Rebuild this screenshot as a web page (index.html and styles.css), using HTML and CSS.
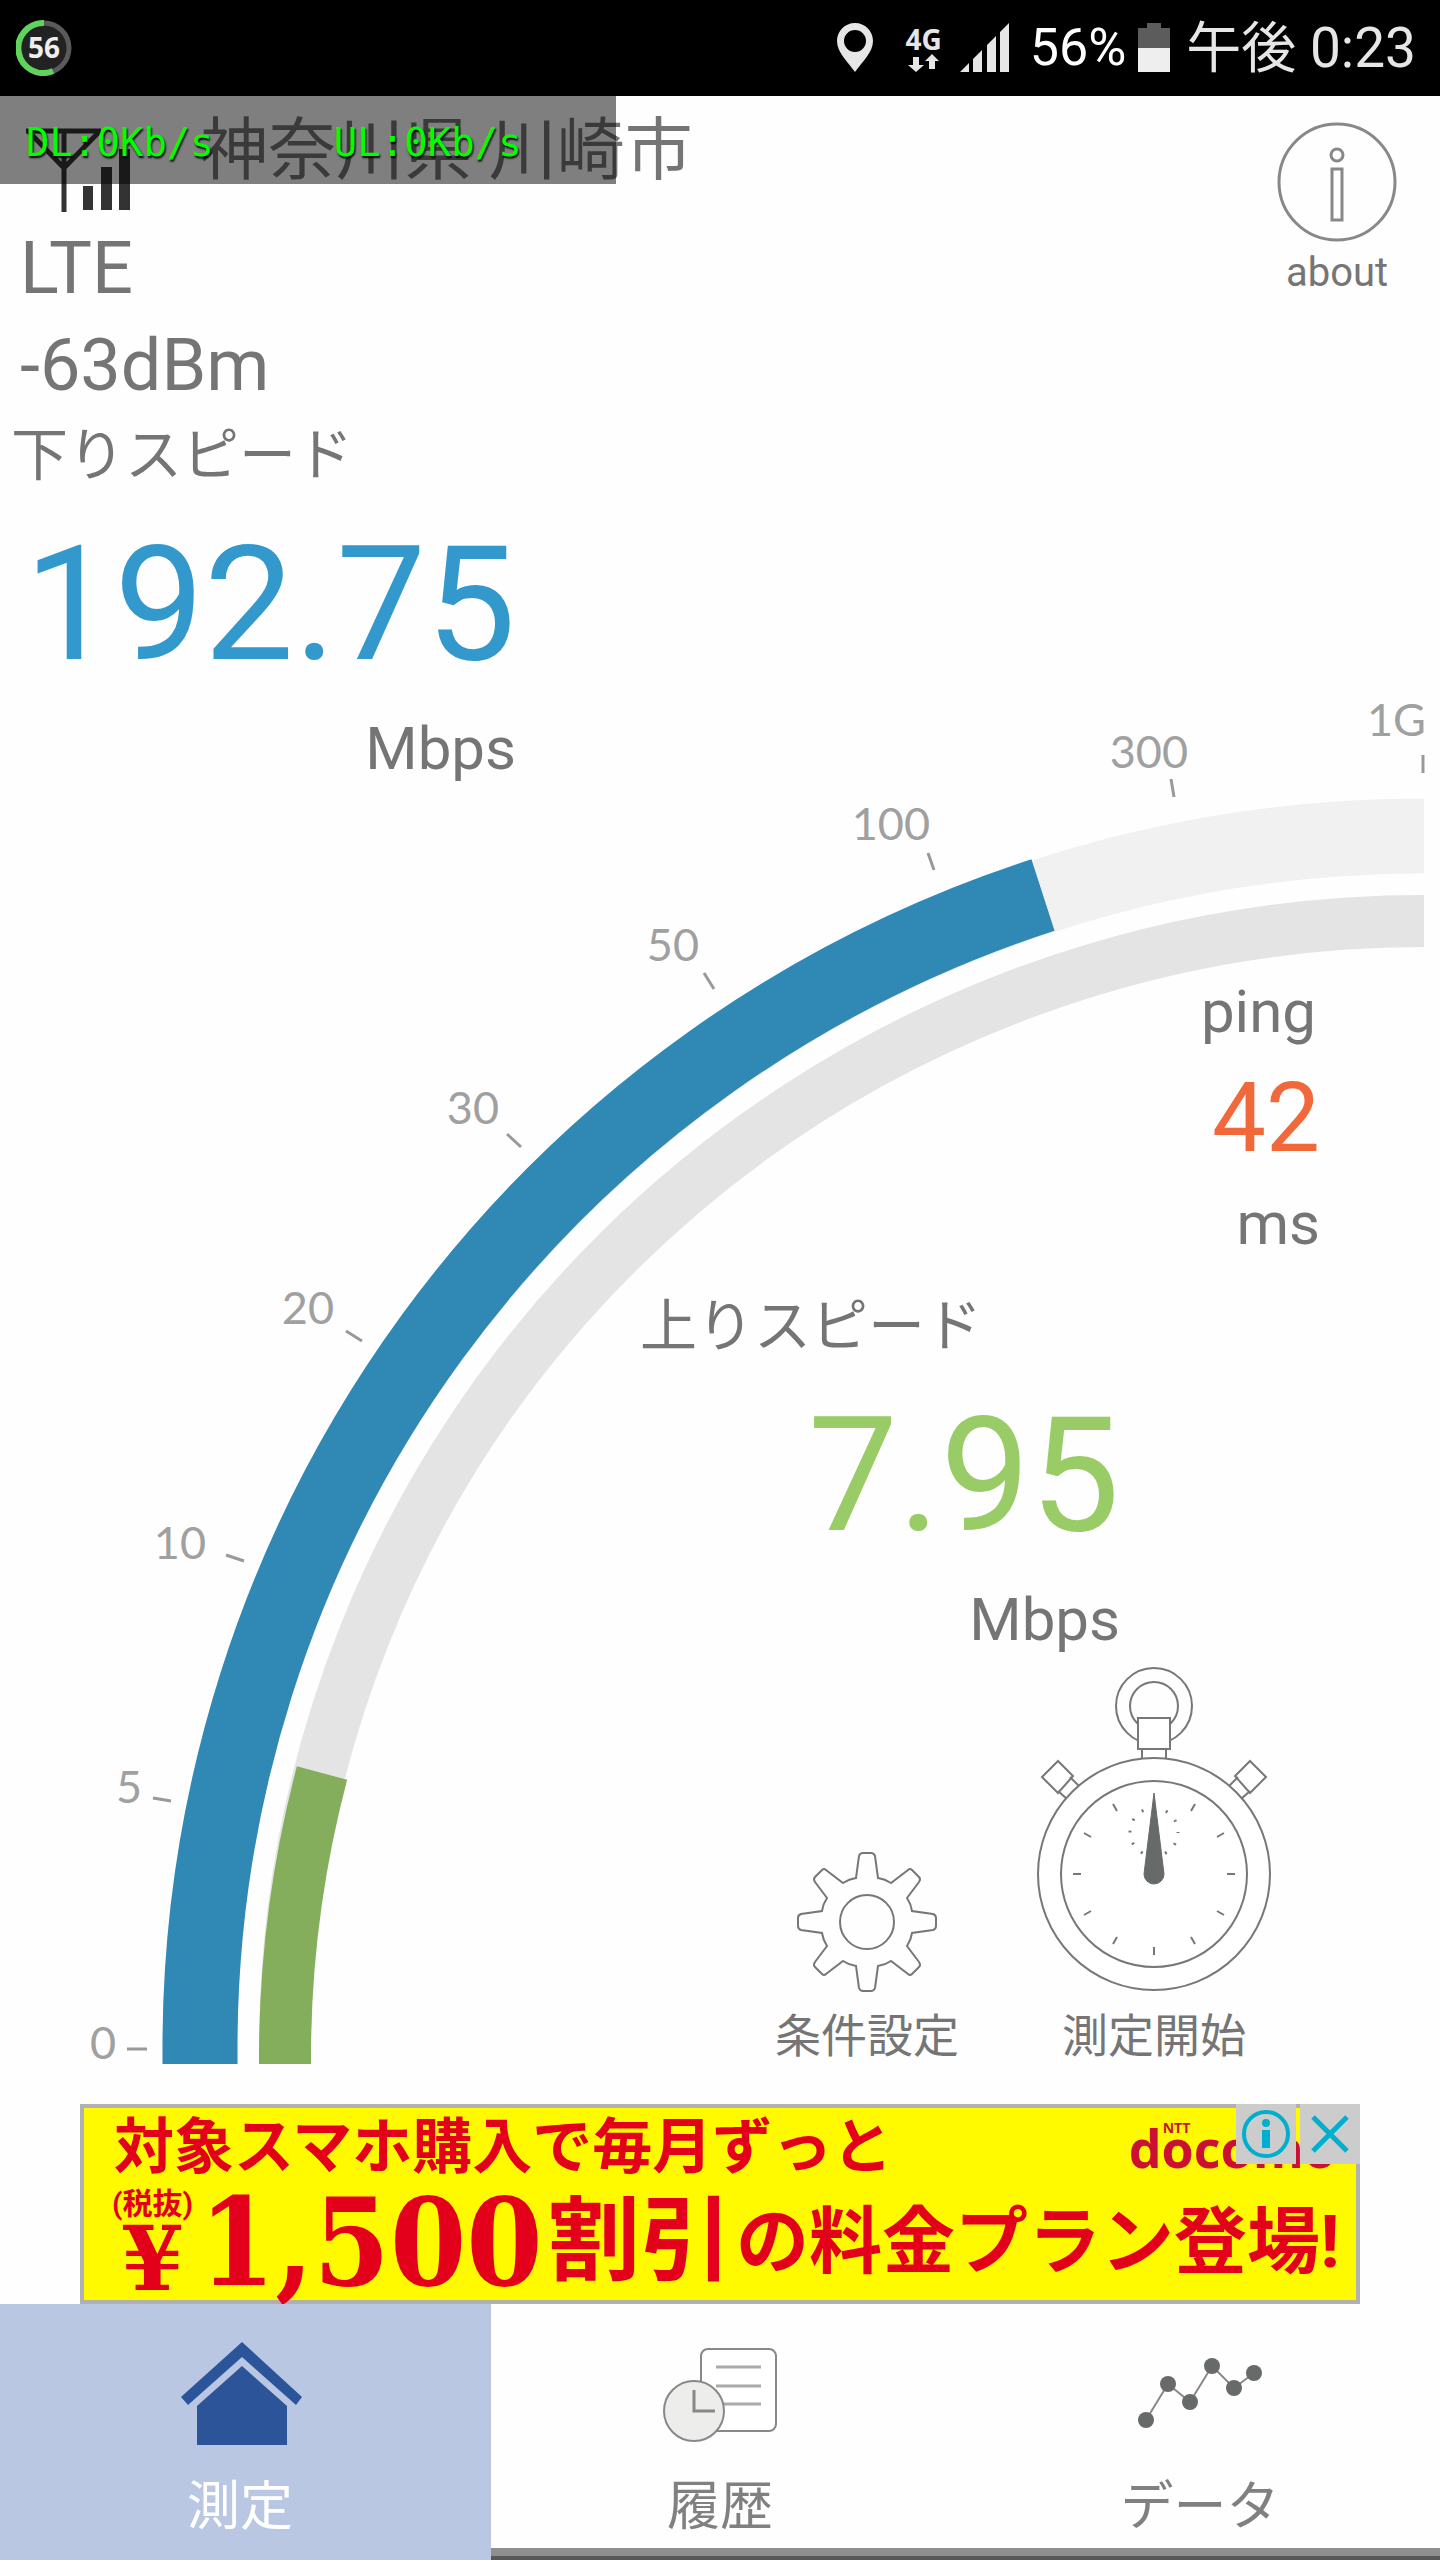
FILE: index.html
```html
<!DOCTYPE html>
<html lang="ja">

<head>
    <meta charset="UTF-8">
    <meta name="viewport" content="width=device-width, initial-scale=1.0">
    <title>測定</title>
    <link rel="stylesheet" href="styles.css">
</head>

<body>
    <header class="status-bar">
        <svg class="badge" viewBox="0 0 56 56" width="56" height="56">
            <circle cx="28" cy="28" r="25" fill="#222" stroke="#5a5a5a" stroke-width="5" />
            <path d="M28 3A25 25 0 1 0 37 51" fill="none" stroke="#5fd35c" stroke-width="6" />
            <text x="28" y="38" class="badge-text">56</text>
        </svg>
        <div class="status-right">
            <svg viewBox="0 0 36 50" width="36" height="50">
                <path fill="#e6e6e6" fill-rule="evenodd" d="M18 0C8 0 0 8 0 18c0 11 10 20 18 31c8-11 18-20 18-31C36 8 28 0 18 0zM18 7a11 11 0 1 1 0 22a11 11 0 0 1 0-22z" />
            </svg>
            <div class="network">
                <span>4G</span>
                <svg viewBox="0 0 32 18" width="32" height="18">
                    <path fill="#e6e6e6" d="M5 3h6v8h5l-8 7l-8-7h5zM21 15h6V7h4l-7-7l-7 7h4z" />
                </svg>
            </div>
            <svg class="signal" viewBox="0 0 50 50" width="50" height="50">
                <path fill="#e6e6e6" d="M0 49L9 40V49zM13 36L22 27V49H13zM27 22L36 13V49H27zM40 9L49 0V49H40z" />
            </svg>
            <span class="status-text percent">56%</span>
            <svg class="battery" viewBox="0 0 32 50" width="32" height="50">
                <path fill="#5c5c5c" d="M9 0H23V5H32V25H0V5H9z" />
                <path fill="#eee" d="M0 25H32V49H0z" />
            </svg>
            <span class="status-text">午後 0:23</span>
        </div>
    </header>

    <main class="main">
        <div class="traffic">
            <span>DL:0Kb/s</span>
            <span>UL:0Kb/s</span>
        </div>

        <!-- speed gauge -->
        <svg class="gauge" viewBox="0 96 1440 2008">
            <g fill="none">
                <path d="M200 2064V2049A1224 1213 0 0 1 1424 836" stroke="#f1f1f1" stroke-width="75" />
                <path d="M285 2064V2049A1139 1128 0 0 1 1424 921" stroke="#e4e4e4" stroke-width="52" />
                <path d="M200 2064V2049A1224 1213 0 0 1 1043 895" stroke="#3088b5" stroke-width="75" />
                <path d="M285 2064V2049A1139 1128 0 0 1 322 1773" stroke="#85ae5c" stroke-width="52" />
            </g>
            <path class="ticks" d="M127 2049H147M153 1798L171 1801M226 1555L244 1561M346 1331L362 1341M507 1134L521 1147M704 973L714 989M928 853L934 870M1171 779L1174 797M1423 755V773" />
            <g class="scale">
                <text x="116" y="2059">0</text>
                <text x="142" y="1803">5</text>
                <text x="206" y="1559">10</text>
                <text x="334" y="1324">20</text>
                <text x="499" y="1124">30</text>
                <text x="699" y="961">50</text>
                <text x="930" y="840">100</text>
                <text x="1188" y="768">300</text>
                <text x="1426" y="736">1G</text>
            </g>
        </svg>

        <div class="content">
            <div class="top">
                <div class="info">
                    <div class="location">
                        <svg viewBox="24 120 110 100" width="110" height="100">
                            <path d="M26 131H101M29 132L64 168L99 132M64 131V212" fill="none" stroke="#333" stroke-width="5" />
                            <path d="M83 186H93V210H83zM101 167H112V210H101zM119 149H130V210H119z" fill="#333" />
                        </svg>
                        <span>神奈川県 川崎市</span>
                    </div>
                    <p class="signal-info">LTE</p>
                    <p class="signal-info">-63dBm</p>
                </div>
                <button class="about">
                    <svg viewBox="0 0 120 120" width="120" height="120" fill="none" stroke="#888" stroke-width="3">
                        <circle cx="60" cy="60" r="58" />
                        <circle cx="60" cy="33" r="6" />
                        <path d="M55 47H65V98H55z" />
                    </svg>
                    about
                </button>
            </div>

            <section class="speed download">
                <h2>下りスピード</h2>
                <p class="value">192.75</p>
                <p class="unit">Mbps</p>
            </section>

            <section class="ping">
                <h2>ping</h2>
                <p class="ping-value">42</p>
                <p>ms</p>
            </section>

            <section class="speed upload">
                <h2>上りスピード</h2>
                <p class="value">7.95</p>
                <p class="unit">Mbps</p>
            </section>

            <div class="actions">
                <button class="action">
                    <svg viewBox="-72 -72 144 144" width="144" height="144" fill="none" stroke="#777" stroke-width="2">
                        <path d="M-11-44L-8-66Q-7-69-4-69H4Q7-69 8-66L11-44Q18-43 24-39L41-52Q43-54 45-52L52-45Q54-43 52-40L40-24Q44-18 45-11L66-8Q69-7 69-4V4Q69 7 66 8L45 11Q44 18 40 24L52 40Q54 43 52 45L45 52Q43 54 41 52L24 39Q18 43 11 44L8 66Q7 69 4 69H-4Q-7 69-8 66L-11 44Q-18 43-24 39L-41 52Q-43 54-45 52L-52 45Q-54 43-52 40L-40 24Q-44 18-45 11L-66 8Q-69 7-69 4V-4Q-69-7-66-8L-45-11Q-44-18-40-24L-52-40Q-54-43-52-45L-45-52Q-43-54-41-52L-24-39Q-18-43-11-44z" />
                        <circle r="27" />
                    </svg>
                    条件設定
                </button>
                <button class="action">
                    <svg viewBox="-119 -210 238 330" width="238" height="330" fill="none" stroke="#777" stroke-width="2">
                        <circle cy="-168" r="38" />
                        <circle cy="-168" r="24" />
                        <path d="M-12-125V-114H12V-125M-16-156H16V-125H-16z" fill="#fff" />
                        <g id="knob">
                            <path d="M-84-97L-75-88L-87-75L-96-83M-96-113L-112-97L-96-81L-81-98z" fill="#fff" />
                        </g>
                        <use href="#knob" transform="scale(-1 1)" />
                        <circle r="116" fill="#fff" />
                        <circle r="93" />
                        <path d="M-81 0H-73M73 0H81M0 73V81M-70-41L-63-37M70-41L63-37M-70 41L-63 37M70 41L63 37M-41-70L-37-63M41-70L37-63M-41 70L-37 63M41 70L37 63" />
                        <circle cy="-42" r="24" stroke-width="3" stroke-dasharray="2 10.566" stroke-dashoffset="1" />
                        <path d="M0-81L10 0A10 10 0 0 1-10 0z" fill="#666a68" stroke="#666a68" stroke-width="1" />
                    </svg>
                    測定開始
                </button>
            </div>
        </div>
    </main>

    <div class="ad">
        <a href="#" class="ad-link">
            <span class="ad-row ad-first">
                <span>対象スマホ購入で毎月ずっと</span>
                <span class="docomo">docomo<small>NTT</small></span>
            </span>
            <span class="ad-row ad-second">
                <span class="yen"><small>(税抜)</small><span>¥</span></span>
                <span class="amount">1,500</span>
                <span class="discount">割引</span>
                <span class="plan">の料金プラン登場!</span>
            </span>
        </a>
        <div class="ad-buttons">
            <button aria-label="広告情報">
                <svg viewBox="0 0 60 60" width="60" height="60">
                    <circle cx="30" cy="30" r="22" fill="none" stroke="#00aecd" stroke-width="4" />
                    <circle cx="30" cy="19" r="4" fill="#00aecd" />
                    <path d="M26 26H34V44H26z" fill="#00aecd" />
                </svg>
            </button>
            <button aria-label="閉じる">
                <svg viewBox="0 0 60 60" width="60" height="60">
                    <path d="M13 13L47 47M47 13L13 47" stroke="#00aecd" stroke-width="5" />
                </svg>
            </button>
        </div>
    </div>

    <nav class="tabs">
        <a href="#" class="tab active">
            <svg viewBox="-2 0 124 110" width="124" height="110" fill="#2b5499">
                <path d="M62 2L122 57L116 65L62 17L8 65L1 57z" />
                <path d="M62 26L107 66V105H17V66z" />
            </svg>
            測定
        </a>
        <a href="#" class="tab">
            <svg viewBox="658 2340 124 110" width="124" height="110" fill="none" stroke="#888" stroke-width="2">
                <rect x="701" y="2349" width="75" height="82" rx="7" fill="#fff" />
                <path d="M716 2367H761M716 2386H761M716 2404H761" stroke="#aaa" stroke-width="3" />
                <circle cx="694" cy="2411" r="30" fill="#ededec" />
                <path d="M694 2390V2411H715" stroke-width="3" />
            </svg>
            履歴
        </a>
        <a href="#" class="tab">
            <svg viewBox="1138 2340 124 110" width="124" height="110" fill="#666a68">
                <path d="M1146 2420L1168 2384L1190 2402L1212 2366L1234 2388L1254 2373" fill="none" stroke="#888" stroke-width="2" />
                <circle cx="1146" cy="2420" r="8" />
                <circle cx="1168" cy="2384" r="8" />
                <circle cx="1190" cy="2402" r="8" />
                <circle cx="1212" cy="2366" r="8" />
                <circle cx="1234" cy="2388" r="8" />
                <circle cx="1254" cy="2373" r="8" />
            </svg>
            データ
        </a>
    </nav>
</body>

</html>
```

FILE: styles.css
```css
* {
    margin: 0;
    padding: 0;
    box-sizing: border-box;
}

body {
    display: flex;
    flex-direction: column;
    min-height: 100vh;
    background-color: #fefefe;
    color: #757575;
    font-family: Roboto, "Noto Sans CJK JP", sans-serif;
}

svg {
    display: block;
}

h2 {
    font-weight: normal;
}

button {
    border: none;
    background: none;
    color: inherit;
    font-family: inherit;
    cursor: pointer;
}

a {
    color: inherit;
    text-decoration: none;
}

/* status bar */
.status-bar {
    display: flex;
    justify-content: space-between;
    align-items: center;
    height: 96px;
    padding: 0 24px 0 16px;
    background-color: black;
    color: #e6e6e6;
}

.badge-text {
    fill: #eee;
    font-family: "Open Sans", sans-serif;
    font-size: 28px;
    font-weight: bold;
    text-anchor: middle;
}

.status-right {
    display: flex;
    align-items: center;
}

.network {
    display: flex;
    flex-direction: column;
    align-items: center;
    margin: 0 18px 0 32px;
    font-family: "Open Sans", sans-serif;
    font-size: 28px;
    font-weight: bold;
    line-height: 30px;
}

.status-text {
    font-size: 55px;
    line-height: 60px;
}

.percent {
    margin-left: 20px;
    color: white;
    font-size: 52px;
}

.battery {
    margin: 0 16px 0 12px;
}

/* main screen, the gauge lies under the values */
.main {
    position: relative;
    display: grid;
    flex: 1;
}

.traffic {
    position: absolute;
    top: 0;
    left: 0;
    display: flex;
    gap: 120px;
    width: 616px;
    height: 88px;
    padding-left: 26px;
    background-color: rgba(0, 0, 0, 0.5);
    color: #0f0;
    font-family: "DejaVu Sans Mono", monospace;
    font-size: 39px;
    line-height: 94px;
    text-shadow: 1px 2px 2px #000;
    z-index: 2;
}

.gauge {
    grid-area: 1 / 1;
    width: 100%;
}

.ticks {
    stroke: #999;
    stroke-width: 3;
}

.scale {
    fill: #a0a0a0;
    font-family: Lato, sans-serif;
    font-size: 45px;
    text-anchor: end;
}

.content {
    grid-area: 1 / 1;
    z-index: 1;
}

.top {
    display: flex;
    justify-content: space-between;
    align-items: flex-start;
}

.location {
    display: flex;
    gap: 66px;
    padding: 24px 0 0 24px;
    font-size: 68px;
    line-height: 62px;
}

.signal-info {
    padding-left: 20px;
    font-size: 72px;
    line-height: 97px;
}

.about {
    margin: 26px 43px 0 0;
    font-size: 40px;
    line-height: 62px;
}

.speed {
    text-align: right;
}

.speed h2 {
    font-size: 57px;
    line-height: 84px;
    text-align: left;
}

.value {
    font-size: 160px;
    line-height: 214px;
}

.unit {
    font-size: 60px;
    line-height: 74px;
}

.download {
    width: 505px;
    margin-left: 11px;
}

.download .value {
    color: #3399cc;
}

.upload {
    width: 480px;
    margin: 21px 320px 0 auto;
}

.upload .value {
    color: #99cc66;
}

.ping {
    margin: 186px 120px 0 0;
    font-size: 60px;
    line-height: 80px;
    text-align: right;
}

.ping h2 {
    padding-right: 4px;
    font-size: 60px;
}

.ping-value {
    color: #f1693b;
    font-size: 96px;
    line-height: 132px;
}

.actions {
    display: flex;
    justify-content: flex-end;
    align-items: flex-end;
    gap: 76px;
    padding: 7px 167px 40px 0;
}

.action {
    display: flex;
    flex-direction: column;
    align-items: center;
    gap: 14px;
    font-size: 46px;
    line-height: 56px;
}

/* advertisement */
.ad {
    position: relative;
    width: 1280px;
    max-width: 100%;
    height: 200px;
    margin: 0 auto;
    border: 4px solid #b0b0b0;
    background-color: #fffa00;
    color: #e2001a;
    font-weight: bold;
}

.ad-row {
    display: flex;
    align-items: center;
    white-space: nowrap;
}

.ad-first {
    justify-content: space-between;
    height: 80px;
    padding: 0 20px 0 30px;
    font-size: 60px;
    line-height: 80px;
}

.ad-second {
    height: 108px;
    padding-left: 22px;
}

.docomo {
    position: relative;
    color: #cc1033;
    font-family: "Open Sans", sans-serif;
    font-size: 52px;
}

.docomo small {
    position: absolute;
    top: 12px;
    left: 34px;
    font-size: 14px;
    line-height: 16px;
}

.yen {
    display: flex;
    flex-direction: column;
    align-items: center;
    width: 93px;
    font-family: "DejaVu Serif", serif;
    font-size: 90px;
    line-height: 76px;
}

.yen small {
    font-family: Roboto, "Noto Sans CJK JP", sans-serif;
    font-size: 30px;
    line-height: 32px;
}

.amount {
    width: 349px;
    font-family: "DejaVu Serif Condensed", "Liberation Serif", serif;
    font-size: 122px;
    line-height: 108px;
}

.discount {
    margin-right: 4px;
    font-size: 92px;
    line-height: 108px;
}

.plan {
    font-size: 73px;
    line-height: 108px;
}

.ad-buttons {
    position: absolute;
    top: -4px;
    right: -4px;
    display: flex;
    gap: 4px;
}

.ad-buttons button {
    background-color: #ccc;
}

/* bottom tabs */
.tabs {
    display: grid;
    grid-template-columns: repeat(3, 1fr);
    height: 256px;
}

.tab {
    display: flex;
    flex-direction: column;
    align-items: center;
    gap: 27px;
    padding-top: 36px;
    border-bottom: 4px solid #585858;
    box-shadow: inset 0 -8px #8f8f8f;
    color: #808080;
    font-size: 53px;
    line-height: 60px;
}

.tab.active {
    position: relative;
    border-bottom: none;
    background-color: #b9c7e3;
    box-shadow: 11px 0 #b9c7e3;
    color: white;
}
```
